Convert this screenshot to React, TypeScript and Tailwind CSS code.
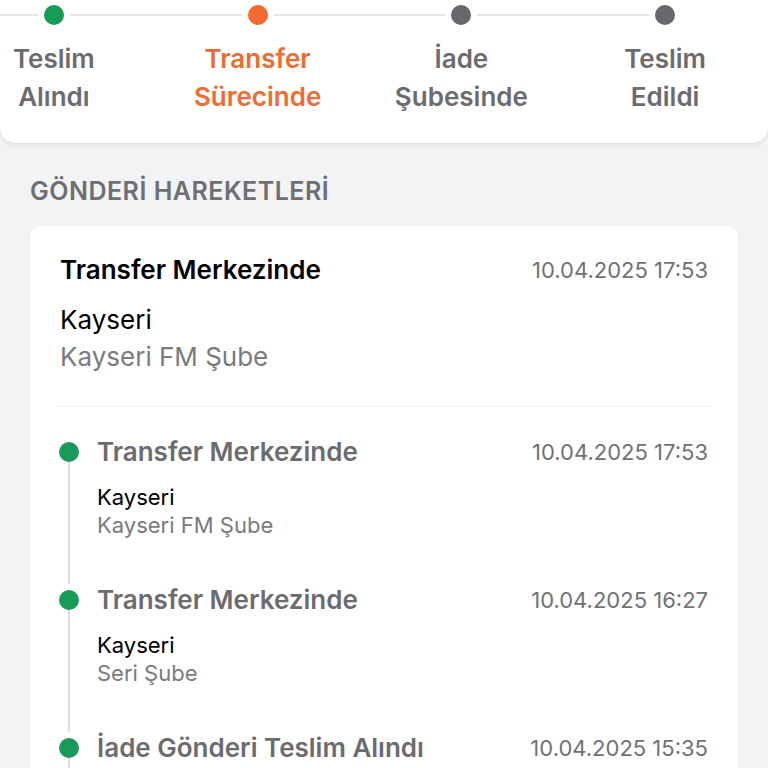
import React from "react";

type StepState = "done" | "active" | "pending";

interface Step {
  lines: string[];
  state: StepState;
}

const steps: Step[] = [
  { lines: ["Teslim", "Alındı"], state: "done" },
  { lines: ["Transfer", "Sürecinde"], state: "active" },
  { lines: ["İade", "Şubesinde"], state: "pending" },
  { lines: ["Teslim", "Edildi"], state: "pending" },
];

interface Movement {
  title: string;
  date: string;
  city: string;
  branch: string;
}

const movements: Movement[] = [
  { title: "Transfer Merkezinde", date: "10.04.2025 17:53", city: "Kayseri", branch: "Kayseri FM Şube" },
  { title: "Transfer Merkezinde", date: "10.04.2025 16:27", city: "Kayseri", branch: "Seri Şube" },
  { title: "İade Gönderi Teslim Alındı", date: "10.04.2025 15:35", city: "Kayseri", branch: "Seri Şube" },
];

const dotColor: Record<StepState, string> = {
  done: "bg-[#179b57]",
  active: "bg-[#f26a2f]",
  pending: "bg-[#67676c]",
};

const labelColor: Record<StepState, string> = {
  done: "text-[#6b6b70]",
  active: "text-[#f26a2f]",
  pending: "text-[#6b6b70]",
};

const Stepper = () => {
  return (
    <div className="bg-white rounded-b-2xl shadow-[0_2px_6px_rgba(0,0,0,0.08)] overflow-hidden">
      <div className="-ml-[48px] w-[815px] grid grid-cols-4 pt-[5px] pb-[27px]">
        {steps.map((step, i) => (
          <div key={i} className="flex flex-col items-center">
            {/* dot with connectors */}
            <div className="flex items-center w-full h-[20px]">
              <div className="flex-1 h-[2px] bg-[#e6e6e8]" />
              <div className="w-[6px]" />
              <div className={`w-[20px] h-[20px] rounded-full ${dotColor[step.state]}`} />
              <div className="w-[6px]" />
              <div className={`flex-1 h-[2px] ${i === steps.length - 1 ? "bg-transparent" : "bg-[#e6e6e8]"}`} />
            </div>
            <div className={`mt-[15px] text-center text-[26px] leading-[38px] font-semibold ${labelColor[step.state]}`}>
              {step.lines.map((l) => (
                <div key={l}>{l}</div>
              ))}
            </div>
          </div>
        ))}
      </div>
    </div>
  );
};

const App = () => {
  return (
    <div
      className="min-h-[768px] bg-[#f2f3f5] pb-10"
      style={{ fontFamily: "Inter, 'Noto Sans', sans-serif" }}
    >
      <Stepper />

      <h2 className="mt-[32px] px-[30px] text-[25px] leading-[32px] font-semibold text-[#6e6e73] tracking-[0.02em]">
        GÖNDERİ HAREKETLERİ
      </h2>

      <div className="mt-[19px] mx-[30px] bg-white rounded-xl px-[30px] pt-[28px] pb-6">
        {/* Latest status */}
        <div className="flex items-center justify-between">
          <span className="text-[26px] leading-[32px] font-semibold text-black">Transfer Merkezinde</span>
          <span className="text-[22px] leading-[32px] text-[#717176]">10.04.2025 17:53</span>
        </div>
        <div className="mt-[15px] text-[26px] leading-[37px] text-black">Kayseri</div>
        <div className="text-[26px] leading-[37px] text-[#7a7a7f]">Kayseri FM Şube</div>

        <div className="mt-[31px] -mx-[4px] h-px bg-[#f0f0f2]" />

        {/* Timeline */}
        <div className="mt-[29px]">
          {movements.map((m, i) => (
            <div key={i} className="flex">
              <div className="relative w-[20px] flex-shrink-0 -ml-[1px]">
                <div className="absolute left-[9px] top-[16px] bottom-0 w-[2px] bg-[#dedee0]" />
                <div className="relative mt-[6px] w-[20px] h-[20px] rounded-full bg-[#179b57]" />
              </div>
              <div className="flex-1 ml-[18px] pb-[45px]">
                <div className="flex items-center justify-between">
                  <span className="text-[26px] leading-[32px] font-semibold text-[#6b6b70]">{m.title}</span>
                  <span className="text-[22px] leading-[32px] text-[#717176]">{m.date}</span>
                </div>
                <div className="mt-[15px] text-[22px] leading-[28px] text-black">{m.city}</div>
                <div className="text-[22px] leading-[28px] text-[#7a7a7f]">{m.branch}</div>
              </div>
            </div>
          ))}
        </div>
      </div>
    </div>
  );
};

export default App;
